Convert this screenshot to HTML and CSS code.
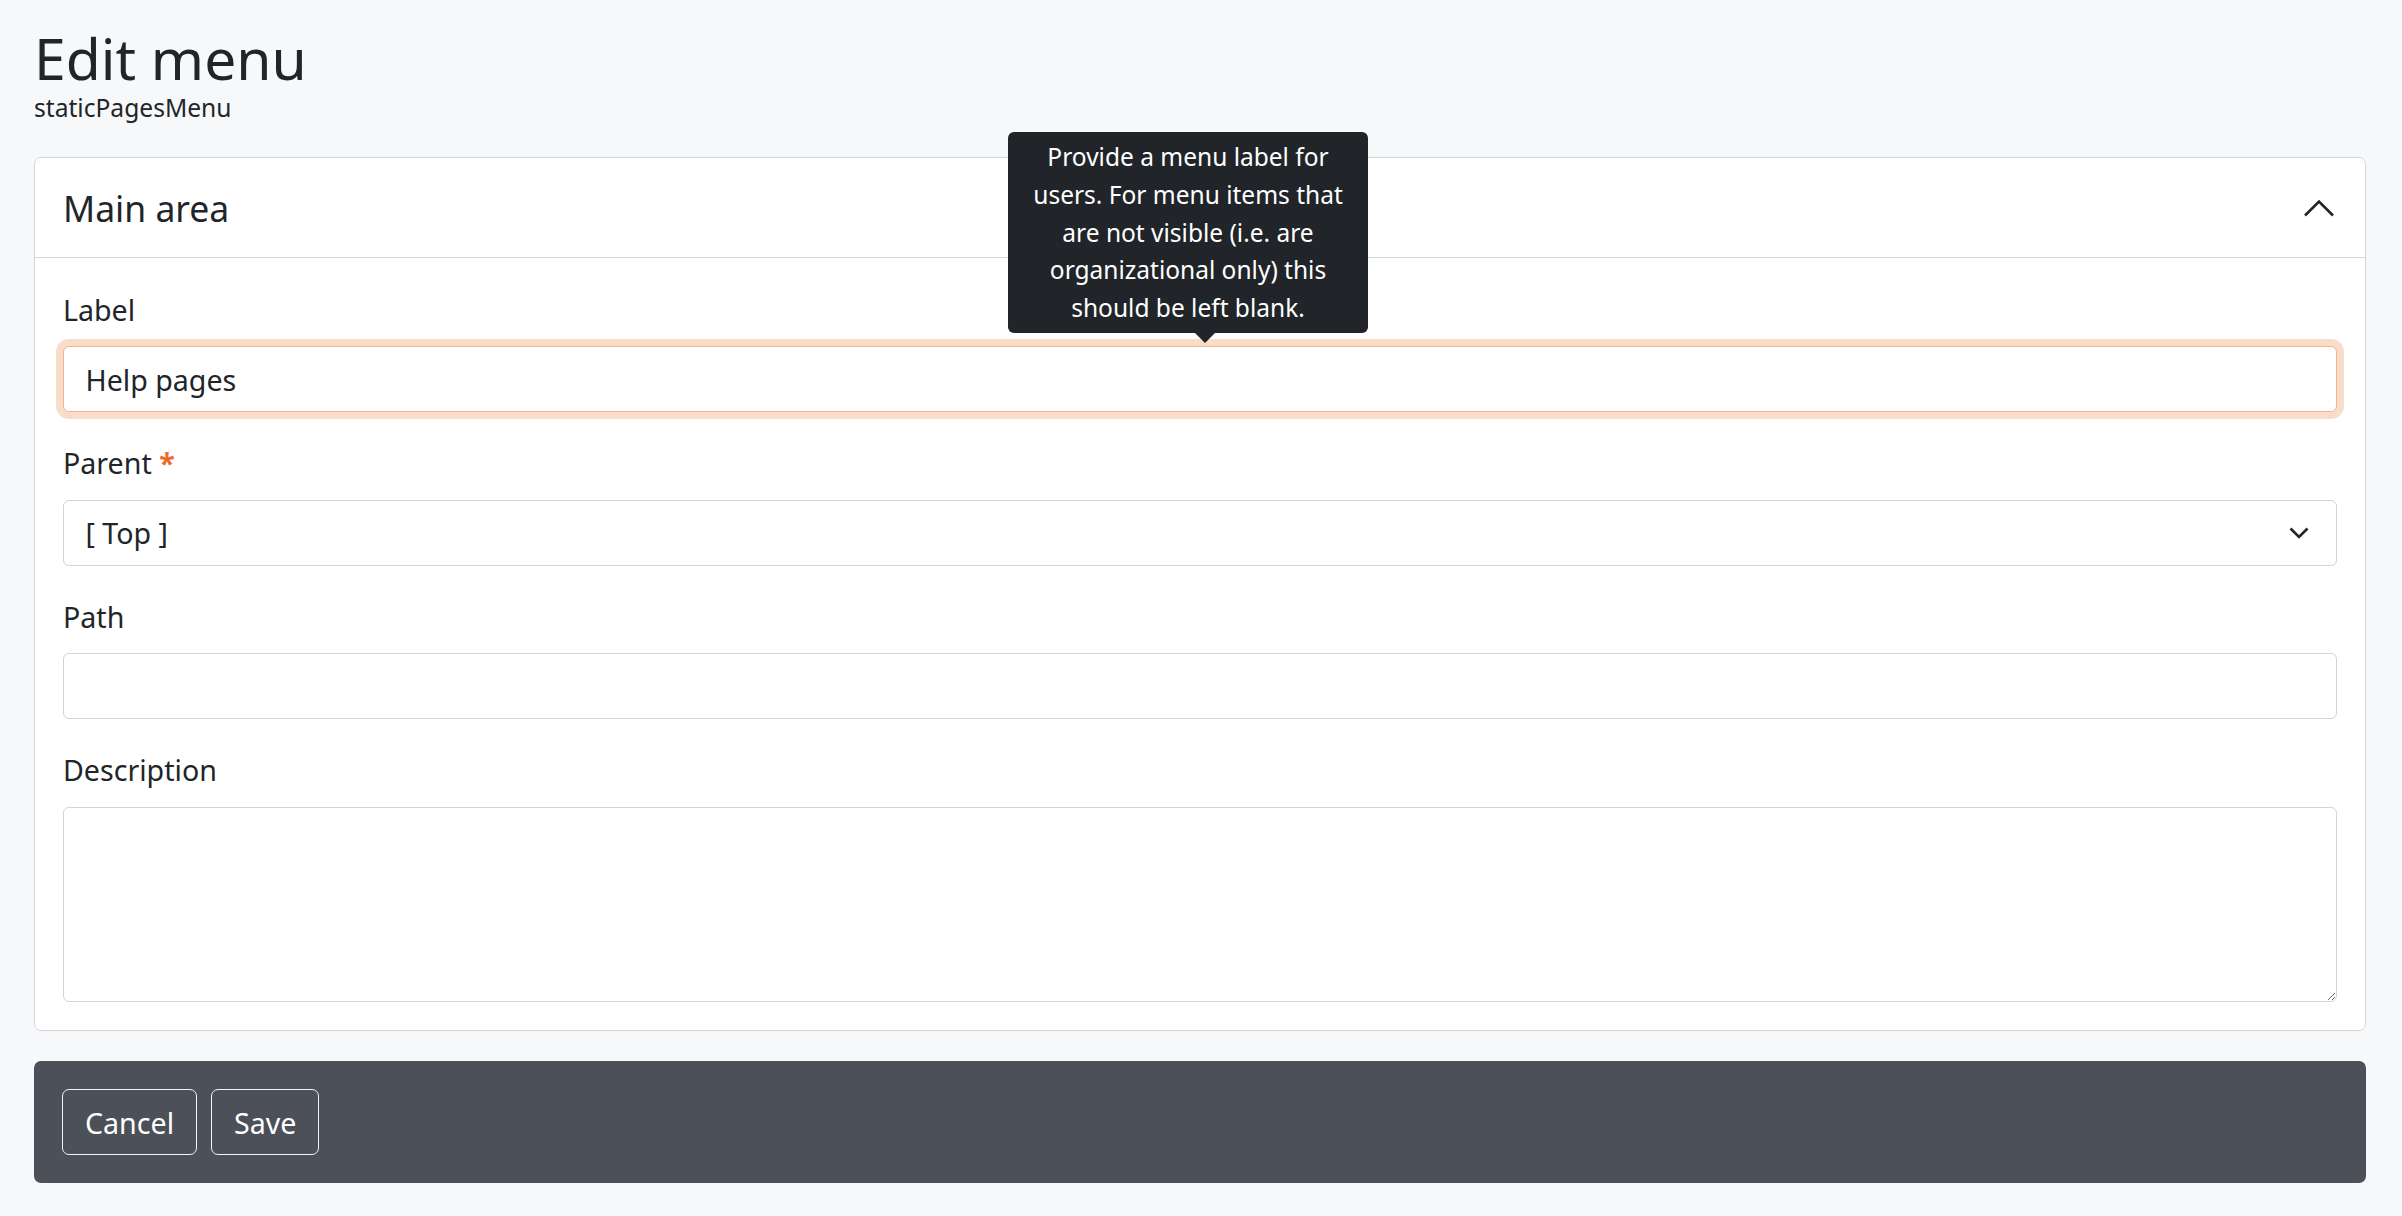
FILE: index.html
```html
<!DOCTYPE html>
<html lang="en">
  <head>
    <meta charset="UTF-8" />
    <title>Edit menu</title>
    <link rel="stylesheet" href="styles.css">
  </head>
  <body>
    <div class="page">
      <header class="page-head">
        <h1>Edit menu</h1>
        <div class="subtitle">staticPagesMenu</div>
      </header>

      <form class="card">
        <div class="card-header">
          <h2>Main area</h2>
          <svg class="collapse-icon" width="30" height="18" viewBox="0 0 30 18">
            <polyline points="1,16.5 15,2.5 29,16.5" />
          </svg>
        </div>

        <div class="card-body">
          <div class="field">
            <label for="label">Label</label>
            <div class="input-wrap">
              <input id="label" class="form-control is-focused" type="text" value="Help pages" />
              <div class="tooltip">
                Provide a menu label for users. For menu items that are not visible (i.e. are organizational only) this should be left blank.
                <span class="tooltip-arrow"></span>
              </div>
            </div>
          </div>

          <div class="field">
            <label>Parent <span class="required">*</span></label>
            <div class="form-control select">
              <span>[ Top ]</span>
              <svg class="select-icon" width="20" height="12" viewBox="0 0 20 12">
                <polyline points="1.5,1.5 10,10 18.5,1.5" />
              </svg>
            </div>
          </div>

          <div class="field">
            <label for="path">Path</label>
            <input id="path" class="form-control" type="text" />
          </div>

          <div class="field">
            <label for="description">Description</label>
            <textarea id="description" class="form-control textarea"></textarea>
          </div>
        </div>
      </form>

      <div class="actions">
        <button type="button" class="btn">Cancel</button>
        <button type="button" class="btn">Save</button>
      </div>
    </div>
  </body>
</html>
```

FILE: styles.css
```css
* {
  margin: 0;
  padding: 0;
  box-sizing: border-box;
}

body {
  font-family: "Noto Sans", "Open Sans", sans-serif;
  background: #f7f8fa;
  color: #212529;
}

.page {
  padding: 23px 36px 0 34px;
}

.page-head h1 {
  font-size: 57px;
  font-weight: 400;
  line-height: 70px;
}

.subtitle {
  font-size: 24.6px;
  line-height: 30px;
}

.card {
  margin-top: 34px;
  background: #ffffff;
  border: 1px solid #d3d7dc;
  border-radius: 7px;
}

.card-header {
  display: flex;
  align-items: center;
  justify-content: space-between;
  height: 100px;
  padding: 0 31px 0 28px;
  border-bottom: 1px solid #d3d7dc;
}

.card-header h2 {
  font-size: 35.5px;
  font-weight: 400;
  line-height: 44px;
}

.collapse-icon polyline,
.select-icon polyline {
  fill: none;
  stroke: #212529;
  stroke-width: 2.6;
}

.card-body {
  display: flex;
  flex-direction: column;
  gap: 33px;
  padding: 33.5px 28px 28.5px;
}

.field label {
  display: block;
  font-size: 28.6px;
  line-height: 36px;
  margin-bottom: 18.5px;
}

.required {
  color: #ec6a2c;
  font-weight: 700;
}

.input-wrap {
  position: relative;
}

.form-control {
  display: block;
  width: 100%;
  height: 66px;
  padding: 0 21.5px;
  font-family: inherit;
  font-size: 28.6px;
  color: #212529;
  background: #ffffff;
  border: 1px solid #cfd4da;
  border-radius: 6px;
  outline: none;
}

.form-control.is-focused {
  border-color: #f2b48e;
  box-shadow: 0 0 0 7px #fadcca;
}

.select {
  display: flex;
  align-items: center;
  justify-content: space-between;
  padding-right: 27px;
}

.textarea {
  height: 195px;
  padding: 12px 21.5px;
  resize: vertical;
}

.tooltip {
  position: absolute;
  left: 945px;
  bottom: calc(100% + 12.7px);
  width: 360px;
  padding: 6.5px 13px;
  background: #212529;
  color: #ffffff;
  border-radius: 6px;
  font-size: 24.5px;
  line-height: 37.7px;
  text-align: center;
}

.tooltip-arrow {
  position: absolute;
  left: 187px;
  top: 100%;
  border-left: 10px solid transparent;
  border-right: 10px solid transparent;
  border-top: 10px solid #212529;
}

.actions {
  display: flex;
  gap: 14px;
  margin-top: 30px;
  padding: 28px;
  background: #4c5058;
  border-radius: 7px;
}

.btn {
  height: 66px;
  padding: 0 22px;
  font-family: inherit;
  font-size: 28.6px;
  color: #ffffff;
  background: transparent;
  border: 1px solid #f1f3f5;
  border-radius: 7px;
  cursor: pointer;
}
```
